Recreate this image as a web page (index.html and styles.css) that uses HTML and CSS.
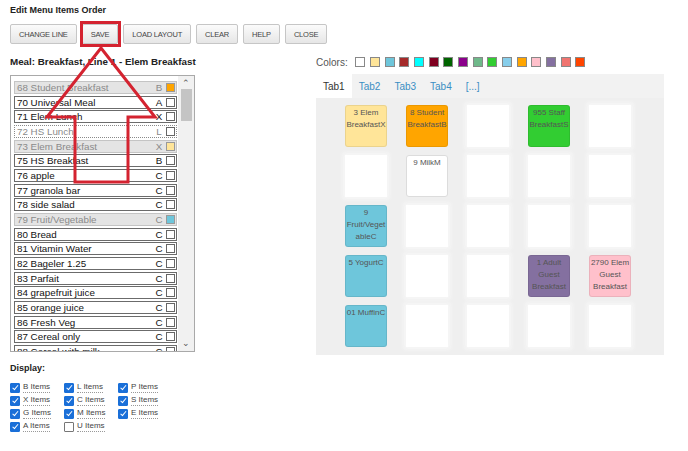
FILE: index.html
```html
<!DOCTYPE html>
<html lang="en">
<head>
  <meta charset="UTF-8" />
  <meta name="viewport" content="width=device-width, initial-scale=1.0"/>
  <title>Edit Menu Items Order</title>
  <link rel="stylesheet" href="styles.css">
</head>
<body>
  <h1 class="page-title">Edit Menu Items Order</h1>

  <div class="toolbar">
    <button class="btn">Change Line</button>
    <button class="btn">Save</button>
    <button class="btn">Load Layout</button>
    <button class="btn">Clear</button>
    <button class="btn">Help</button>
    <button class="btn">Close</button>
  </div>

  <div class="main">
    <div class="left-col">
      <h2 class="meal-title">Meal: Breakfast, Line 1 - Elem Breakfast</h2>

      <div class="item-list">
        <div class="rows">
          <div class="row inactive"><span class="name">68 Student Breakfast</span><span class="code">B</span><span class="box" style="background:#ffa500"></span></div>
          <div class="row"><span class="name">70 Universal Meal</span><span class="code">A</span><span class="box"></span></div>
          <div class="row"><span class="name">71 Elem Lunch</span><span class="code">X</span><span class="box"></span></div>
          <div class="row dotted"><span class="name">72 HS Lunch</span><span class="code">L</span><span class="box"></span></div>
          <div class="row inactive"><span class="name">73 Elem Breakfast</span><span class="code">X</span><span class="box" style="background:#ffe599"></span></div>
          <div class="row"><span class="name">75 HS Breakfast</span><span class="code">B</span><span class="box"></span></div>
          <div class="row"><span class="name">76 apple</span><span class="code">C</span><span class="box"></span></div>
          <div class="row"><span class="name">77 granola bar</span><span class="code">C</span><span class="box"></span></div>
          <div class="row"><span class="name">78 side salad</span><span class="code">C</span><span class="box"></span></div>
          <div class="row inactive"><span class="name">79 Fruit/Vegetable</span><span class="code">C</span><span class="box" style="background:#6ec6db"></span></div>
          <div class="row"><span class="name">80 Bread</span><span class="code">C</span><span class="box"></span></div>
          <div class="row"><span class="name">81 Vitamin Water</span><span class="code">C</span><span class="box"></span></div>
          <div class="row"><span class="name">82 Bageler 1.25</span><span class="code">C</span><span class="box"></span></div>
          <div class="row"><span class="name">83 Parfait</span><span class="code">C</span><span class="box"></span></div>
          <div class="row"><span class="name">84 grapefruit juice</span><span class="code">C</span><span class="box"></span></div>
          <div class="row"><span class="name">85 orange juice</span><span class="code">C</span><span class="box"></span></div>
          <div class="row"><span class="name">86 Fresh Veg</span><span class="code">C</span><span class="box"></span></div>
          <div class="row"><span class="name">87 Cereal only</span><span class="code">C</span><span class="box"></span></div>
          <div class="row"><span class="name">88 Cereal with milk</span><span class="code">C</span><span class="box"></span></div>
        </div>
        <div class="scrollbar">
          <span class="arrow">&#8963;</span>
          <div class="thumb"></div>
          <span class="arrow arrow-down">&#8964;</span>
        </div>
      </div>

      <h3 class="display-title">Display:</h3>
      <div class="display-grid">
        <label class="opt"><span class="check on"></span><span class="opt-text">B Items</span></label>
        <label class="opt"><span class="check on"></span><span class="opt-text">L Items</span></label>
        <label class="opt"><span class="check on"></span><span class="opt-text">P Items</span></label>
        <label class="opt"><span class="check on"></span><span class="opt-text">X Items</span></label>
        <label class="opt"><span class="check on"></span><span class="opt-text">C Items</span></label>
        <label class="opt"><span class="check on"></span><span class="opt-text">S Items</span></label>
        <label class="opt"><span class="check on"></span><span class="opt-text">G Items</span></label>
        <label class="opt"><span class="check on"></span><span class="opt-text">M Items</span></label>
        <label class="opt"><span class="check on"></span><span class="opt-text">E Items</span></label>
        <label class="opt"><span class="check on"></span><span class="opt-text">A Items</span></label>
        <label class="opt"><span class="check"></span><span class="opt-text">U Items</span></label>
      </div>
    </div>

    <div class="right-col">
      <div class="colors">
        <span class="colors-label">Colors:</span>
        <span class="swatch" style="background:#ffffff"></span>
        <span class="swatch" style="background:#ffe599"></span>
        <span class="swatch" style="background:#6ec6db"></span>
        <span class="swatch" style="background:#a52a2a"></span>
        <span class="swatch" style="background:#00ffff"></span>
        <span class="swatch" style="background:#800020"></span>
        <span class="swatch" style="background:#006400"></span>
        <span class="swatch" style="background:#8b008b"></span>
        <span class="swatch" style="background:#6fb98a"></span>
        <span class="swatch" style="background:#32cd32"></span>
        <span class="swatch" style="background:#87ceeb"></span>
        <span class="swatch" style="background:#ffa500"></span>
        <span class="swatch" style="background:#ffc0cb"></span>
        <span class="swatch" style="background:#8470a0"></span>
        <span class="swatch" style="background:#f07470"></span>
        <span class="swatch" style="background:#ff4500"></span>
      </div>

      <div class="tabs">
        <span class="tab active">Tab1</span>
        <span class="tab">Tab2</span>
        <span class="tab">Tab3</span>
        <span class="tab">Tab4</span>
        <span class="tab">[...]</span>
      </div>

      <div class="board">
        <div class="cell" style="background:#ffe599">3 Elem BreakfastX</div>
        <div class="cell" style="background:#ffa500">8 Student BreakfastB</div>
        <div class="cell empty"></div>
        <div class="cell" style="background:#32cd32">955 Staff BreakfastS</div>
        <div class="cell empty"></div>

        <div class="cell empty"></div>
        <div class="cell plain">9 MilkM</div>
        <div class="cell empty"></div>
        <div class="cell empty"></div>
        <div class="cell empty"></div>

        <div class="cell" style="background:#6ec6db">9 Fruit/VegetableC</div>
        <div class="cell empty"></div>
        <div class="cell empty"></div>
        <div class="cell empty"></div>
        <div class="cell empty"></div>

        <div class="cell" style="background:#6ec6db">5 YogurtC</div>
        <div class="cell empty"></div>
        <div class="cell empty"></div>
        <div class="cell" style="background:#8470a0">1 Adult Guest Breakfast</div>
        <div class="cell" style="background:#ffc0cb">2790 Elem Guest Breakfast</div>

        <div class="cell" style="background:#6ec6db">01 MuffinC</div>
        <div class="cell empty"></div>
        <div class="cell empty"></div>
        <div class="cell empty"></div>
        <div class="cell empty"></div>
      </div>
    </div>
  </div>

  <!-- annotation drawn over the screenshot -->
  <svg class="markup" width="688" height="451" viewBox="0 0 688 451">
    <rect x="81.5" y="22.5" width="38" height="23" fill="none" stroke="#d42330" stroke-width="3"/>
    <polygon points="101,48 155,117 128,117 128,182 75,182 75,117 47,117" fill="none" stroke="#d42330" stroke-width="3" stroke-linejoin="miter"/>
  </svg>
</body>
</html>
```

FILE: styles.css
```css
body {
  font-family: 'Liberation Sans', Arial, sans-serif;
  margin: 0;
  padding: 0 10px;
  background: #ffffff;
  color: #333;
  position: relative;
}

.page-title {
  font-size: 9px;
  font-weight: bold;
  line-height: 14px;
  margin: 3px 0 0;
  color: #222;
}

.toolbar {
  display: flex;
  gap: 5px;
  margin-top: 7px;
}

.btn {
  height: 20px;
  padding: 0 8px;
  font-family: inherit;
  font-size: 7.5px;
  letter-spacing: -0.2px;
  text-transform: uppercase;
  color: #444;
  border: 1px solid #c6c6c6;
  border-radius: 2px;
  background: linear-gradient(#fbfbfb, #e6e6e6);
}

.main {
  display: flex;
  margin-top: 9px;
}

.left-col {
  width: 185px;
}

.meal-title {
  font-size: 9.8px;
  font-weight: bold;
  line-height: 18px;
  margin: 0;
  color: #222;
  white-space: nowrap;
}

.item-list {
  display: flex;
  height: 275px;
  margin-top: 4px;
  border: 1px solid #a9a9a9;
  overflow: hidden;
}

.rows {
  flex: 1;
  display: flex;
  flex-direction: column;
  gap: 1.67px;
  padding: 5px 1px 0 3px;
}

.row {
  flex: none;
  display: flex;
  align-items: center;
  height: 13px;
  box-sizing: border-box;
  border: 1px solid #6b6b6b;
  background: #fff;
  padding-left: 2px;
  font-size: 9.8px;
  color: #111;
}

.row.inactive {
  background: #e4e4e4;
  border-color: #c4c4c4;
  color: #8a8a8a;
}

.row.dotted {
  border-style: dotted;
  border-color: #8a8a8a;
  color: #8a8a8a;
}

.row .name {
  flex: 1;
  white-space: nowrap;
}

.row .code {
  width: 12px;
  text-align: center;
  margin-right: 1px;
}

.row .box {
  width: 9px;
  height: 9px;
  box-sizing: border-box;
  border: 1px solid #666;
  background: #fff;
  margin-right: 1px;
}

.row.inactive .box {
  border-color: #999;
}

.scrollbar {
  width: 16px;
  background: #f1f1f1;
  display: flex;
  flex-direction: column;
  align-items: center;
}

.arrow {
  font-size: 9px;
  line-height: 10px;
  height: 10px;
  color: #555;
  margin-top: 2px;
}

.thumb {
  width: 11px;
  height: 32px;
  background: #c4c4c4;
  margin-top: 1px;
}

.arrow-down {
  margin-top: auto;
  margin-bottom: 3px;
}

.display-title {
  font-size: 9px;
  font-weight: bold;
  line-height: 12px;
  margin: 10px 0 0;
  color: #222;
}

.display-grid {
  display: grid;
  grid-template-columns: 54px 54px 54px;
  grid-auto-rows: 13px;
  margin-top: 7px;
}

.opt {
  display: flex;
  align-items: center;
  gap: 3px;
  font-size: 8px;
  color: #444;
}

.check {
  width: 10px;
  height: 10px;
  box-sizing: border-box;
  border: 1px solid #767676;
  border-radius: 1px;
  background: #fff;
  position: relative;
}

.check.on {
  background: #1a6fd8;
  border-color: #1a6fd8;
}

.check.on::after {
  content: '';
  position: absolute;
  left: 2.5px;
  top: 0.5px;
  width: 2px;
  height: 4.5px;
  border: solid #fff;
  border-width: 0 1.5px 1.5px 0;
  transform: rotate(40deg);
}

.opt-text {
  border-bottom: 1px dotted #999;
  line-height: 10px;
}

.right-col {
  width: 348px;
  margin-left: 121px;
}

.colors {
  display: flex;
  align-items: center;
  height: 18px;
  gap: 4.67px;
}

.colors-label {
  font-size: 10px;
  color: #555;
  margin-right: 3px;
}

.swatch {
  width: 10px;
  height: 10px;
  box-sizing: border-box;
  border: 1px solid #888;
}

.tabs {
  display: flex;
  height: 24px;
  margin-top: 3px;
  background: #f2f2f2;
}

.tab {
  display: flex;
  align-items: center;
  padding: 0 7px;
  font-size: 10px;
  color: #3a8ec3;
}

.tab.active {
  background: #fff;
  color: #333;
}

.board {
  height: 257px;
  box-sizing: border-box;
  background: #efefef;
  padding: 7px 0 0 29px;
  display: grid;
  grid-template-columns: repeat(5, 42px);
  grid-auto-rows: 42px;
  column-gap: 19px;
  row-gap: 8px;
}

.cell {
  border-radius: 3px;
  box-shadow: inset 0 0 0 1px rgba(0, 0, 0, 0.08);
  padding-top: 2px;
  box-sizing: border-box;
  font-size: 8px;
  line-height: 12px;
  color: #555;
  text-align: center;
  overflow-wrap: break-word;
  overflow: hidden;
}

.cell.plain {
  background: #fff;
  box-shadow: inset 0 0 0 1px #dcdcdc;
}

.cell.empty {
  background: #fff;
  border-radius: 0;
  box-shadow: 0 0 4px 2px #f8f8f8;
}

.markup {
  position: absolute;
  top: 0;
  left: 0;
  pointer-events: none;
}
```
